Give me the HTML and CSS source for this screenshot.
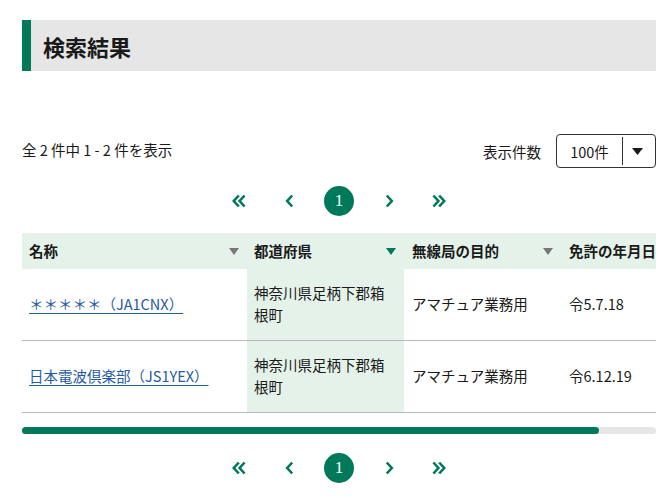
FILE: index.html
```html
<!DOCTYPE html>
<html lang="ja">
<head>
<meta charset="utf-8">
<title>検索結果</title>
<link rel="stylesheet" href="styles.css">
</head>
<body>
<div class="page">
  <h1 class="title">検索結果</h1>

  <div class="summary">
    <div class="count">全 2 件中 1 - 2 件を表示</div>
    <div class="per-page">
      <span class="per-label">表示件数</span>
      <div class="select">
        <span class="select-val">100件</span>
        <span class="select-btn"><svg width="11" height="7" viewBox="0 0 11 7"><path d="M0 0H11L5.5 7Z" fill="#1a1a1a"/></svg></span>
      </div>
    </div>
  </div>

  <nav class="pager">
    <a class="pg"><svg width="14" height="14" viewBox="0 0 14 14"><path d="M6.8 1.5L1.8 7l5 5.5M12.6 1.5L7.6 7l5 5.5" fill="none" stroke="#00795b" stroke-width="2.6"/></svg></a>
    <a class="pg"><svg width="9" height="14" viewBox="0 0 9 14"><path d="M7.2 1.5L2.2 7l5 5.5" fill="none" stroke="#00795b" stroke-width="2.6"/></svg></a>
    <span class="pg current">1</span>
    <a class="pg"><svg width="9" height="14" viewBox="0 0 9 14"><path d="M1.8 1.5L6.8 7l-5 5.5" fill="none" stroke="#00795b" stroke-width="2.6"/></svg></a>
    <a class="pg"><svg width="14" height="14" viewBox="0 0 14 14"><path d="M1.4 1.5L6.4 7l-5 5.5M7.2 1.5L12.2 7l-5 5.5" fill="none" stroke="#00795b" stroke-width="2.6"/></svg></a>
  </nav>

  <div class="table-wrap">
    <table class="results">
      <colgroup>
        <col class="c1"><col class="c2"><col class="c3"><col class="c4">
      </colgroup>
      <thead>
        <tr>
          <th><div class="th-in"><span>名称</span><i class="sort"></i></div></th>
          <th class="sorted"><div class="th-in"><span>都道府県</span><i class="sort active"></i></div></th>
          <th><div class="th-in"><span>無線局の目的</span><i class="sort"></i></div></th>
          <th><div class="th-in"><span>免許の年月日</span><i class="sort"></i></div></th>
        </tr>
      </thead>
      <tbody>
        <tr>
          <td><a href="#" class="link">＊＊＊＊＊（JA1CNX）</a></td>
          <td class="sorted">神奈川県足柄下郡箱根町</td>
          <td>アマチュア業務用</td>
          <td>令5.7.18</td>
        </tr>
        <tr>
          <td><a href="#" class="link">日本電波倶楽部（JS1YEX）</a></td>
          <td class="sorted">神奈川県足柄下郡箱根町</td>
          <td>アマチュア業務用</td>
          <td>令6.12.19</td>
        </tr>
      </tbody>
    </table>
  </div>
  <div class="scrollbar"><div class="thumb" style="width:91%"></div></div>

  <nav class="pager bottom">
    <a class="pg"><svg width="14" height="14" viewBox="0 0 14 14"><path d="M6.8 1.5L1.8 7l5 5.5M12.6 1.5L7.6 7l5 5.5" fill="none" stroke="#00795b" stroke-width="2.6"/></svg></a>
    <a class="pg"><svg width="9" height="14" viewBox="0 0 9 14"><path d="M7.2 1.5L2.2 7l5 5.5" fill="none" stroke="#00795b" stroke-width="2.6"/></svg></a>
    <span class="pg current">1</span>
    <a class="pg"><svg width="9" height="14" viewBox="0 0 9 14"><path d="M1.8 1.5L6.8 7l-5 5.5" fill="none" stroke="#00795b" stroke-width="2.6"/></svg></a>
    <a class="pg"><svg width="14" height="14" viewBox="0 0 14 14"><path d="M1.4 1.5L6.4 7l-5 5.5M7.2 1.5L12.2 7l-5 5.5" fill="none" stroke="#00795b" stroke-width="2.6"/></svg></a>
  </nav>
</div>
</body>
</html>
```

FILE: styles.css
```css
* { box-sizing: border-box; }

html, body {
  margin: 0;
  padding: 0;
  background: #fff;
}

body {
  font-family: "Noto Sans CJK JP", "Noto Sans", sans-serif;
  color: #1a1a1a;
  font-size: 14.5px;
}

.page {
  padding: 20px 5px 0 22px;
}

.title {
  margin: 0;
  height: 51px;
  display: flex;
  align-items: center;
  background: #e6e6e6;
  border-left: 9px solid #00795b;
  padding-left: 12px;
  font-size: 22px;
  font-weight: 700;
  color: #1a1a1a;
}

.summary {
  margin-top: 63px;
  display: flex;
  justify-content: space-between;
  align-items: center;
}

.count {
  font-size: 14.5px;
  line-height: 20px;
  margin-top: -2px;
}

.per-page {
  display: flex;
  align-items: center;
  gap: 15px;
}

.per-label {
  font-size: 14.5px;
}

.select {
  width: 100px;
  height: 34px;
  border: 1px solid #333;
  border-radius: 4px;
  display: flex;
  align-items: stretch;
}

.select-val {
  width: 65px;
  display: flex;
  align-items: center;
  justify-content: center;
  font-size: 14.5px;
}

.select-btn {
  flex: 1;
  border-left: 1px solid #333;
  margin: 2px 0;
  padding-right: 3px;
  display: flex;
  align-items: center;
  justify-content: center;
}

.pager {
  margin-top: 18px;
  display: flex;
  justify-content: center;
  align-items: center;
  gap: 20px;
  height: 30px;
}

.pg {
  width: 30px;
  height: 30px;
  display: flex;
  align-items: center;
  justify-content: center;
}

.pg.current {
  border-radius: 50%;
  background: #00795b;
  color: #fff;
  font-family: "Liberation Serif", "DejaVu Serif", serif;
  font-size: 17px;
}

.table-wrap {
  margin-top: 17px;
  overflow: hidden;
}

.results {
  width: 697px;
  border-collapse: separate;
  border-spacing: 0;
  table-layout: fixed;
}

.c1 { width: 225px; }
.c2 { width: 157px; }
.c3 { width: 157px; }
.c4 { width: 158px; }

.results th {
  background: #e5f2ea;
  text-align: left;
  font-weight: 700;
  font-size: 14.5px;
  line-height: 22px;
  padding: 7px 8px 7px 7px;
}

.th-in {
  display: flex;
  justify-content: space-between;
  align-items: center;
  white-space: nowrap;
}

.sort {
  width: 0;
  height: 0;
  border-left: 5.5px solid transparent;
  border-right: 5.5px solid transparent;
  border-top: 7px solid #777;
}

.sort.active {
  border-top-color: #00795b;
}

.results td {
  font-size: 14.5px;
  line-height: 22px;
  padding: 13px 16px 14px 7px;
  border-bottom: 1px solid #b8b8b8;
  vertical-align: middle;
}

.results td:nth-child(3),
.results td:nth-child(4),
.results th:nth-child(3),
.results th:nth-child(4) {
  padding-left: 8px;
}

.results td.sorted {
  background: #e5f2ea;
}

.link {
  color: #1f5aa2;
  text-decoration: underline;
  text-underline-offset: 3px;
}

.scrollbar {
  margin-top: 14px;
  height: 7px;
  border-radius: 4px;
  background: #e6e6e6;
}

.thumb {
  height: 100%;
  border-radius: 4px;
  background: #00795b;
}

.pager.bottom {
  margin-top: 19px;
}
```
